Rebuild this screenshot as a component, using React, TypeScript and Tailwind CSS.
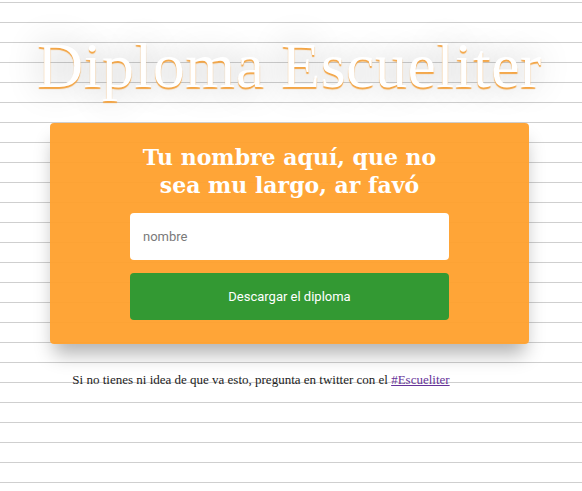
import { useState } from "react";

export default function App() {
    const [nombre, setNombre] = useState("")

    return (
        <div className="min-h-screen w-full bg-white bg-[linear-gradient(#cfcfcf_1px,transparent_1px)] bg-size-[100%_20px] bg-position-[0_2px] flex flex-col items-center">
            <h1 className="mt-[30px] mr-[3px] h-[72px] text-[64px] leading-[72px] tracking-[0.5px] text-white font-['Liberation_Serif',serif] [text-shadow:0_2px_1px_#f3a443,0_0_34px_rgba(0,0,0,0.3)]">
                Diploma Escueliter
            </h1>

            <div className="mt-[21px] mr-[3px] w-[479px] h-[221px] rounded bg-[rgba(255,160,44,0.95)] shadow-[0_14px_18px_-4px_rgba(0,0,0,0.3)] pt-[20px] flex flex-col items-center">
                <h2 className="text-[22px] leading-[28px] font-bold text-white text-center font-['DejaVu_Serif',serif] w-[320px]">
                    Tu nombre aquí, que no sea mu largo, ar favó
                </h2>

                <input
                    value={nombre}
                    onChange={(e) => setNombre(e.target.value)}
                    placeholder="nombre"
                    className="mt-[14px] w-[319px] h-[47px] rounded bg-white px-[13px] text-[13px] font-['Roboto',sans-serif] text-gray-700 placeholder:text-[#7a7a7a] outline-none"
                />

                <button className="mt-[13px] w-[319px] h-[47px] rounded bg-[#339933] text-white text-[13px] font-['Roboto',sans-serif]">
                    Descargar el diploma
                </button>
            </div>

            <p className="mt-[26px] mr-[60px] text-[13px] text-[#222] font-['Liberation_Serif',serif]">
                Si no tienes ni idea de que va esto, pregunta en twitter con el{" "}
                <a href="#" className="text-[#663399] underline">#Escueliter</a>
            </p>
        </div>
    )
}
